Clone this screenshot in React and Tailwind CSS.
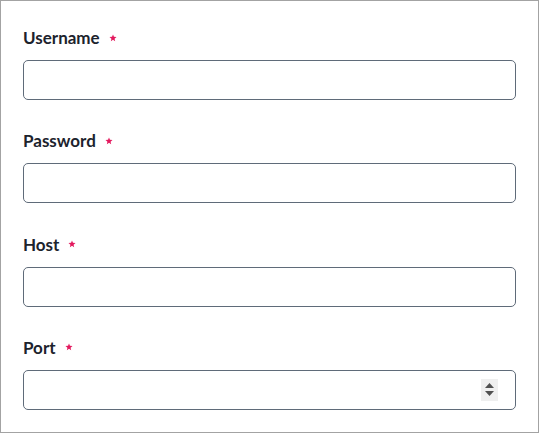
import React from "react";

function Field({ label, spinner }) {
  return (
    <div className="flex flex-col">
      <label className="flex items-center h-6 mb-[10px] text-[17px] leading-6 font-bold text-[#1c232d]">
        <span>{label}</span>
        <svg className="ml-[9px] relative top-[-0.5px]" width="8" height="8" viewBox="0 0 24 24">
          <path
            d="M12 1.5 L14.9 8.6 L22.5 9.2 L16.7 14.1 L18.5 21.6 L12 17.6 L5.5 21.6 L7.3 14.1 L1.5 9.2 L9.1 8.6 Z"
            fill="#e3195e"
          />
        </svg>
      </label>
      <div className="relative">
        <input
          type="text"
          className="block w-full h-10 rounded-[5px] border border-[#5f6b79] bg-white px-3 outline-none"
        />
        {spinner && (
          <div className="absolute right-[18px] top-[9px] w-[17px] h-[22px] bg-[#efefef] flex flex-col items-center justify-center gap-[3px]">
            <svg width="9" height="5" viewBox="0 0 9 5"><path d="M0 5 L4.5 0 L9 5 Z" fill="#505050" /></svg>
            <svg width="9" height="5" viewBox="0 0 9 5"><path d="M0 0 L4.5 5 L9 0 Z" fill="#505050" /></svg>
          </div>
        )}
      </div>
    </div>
  );
}

export default function App() {
  return (
    <div
      className="w-[539px] h-[433px] border border-[#a3a3a3] bg-white px-[22px] pt-[25px] overflow-hidden"
      style={{ fontFamily: '"Source Sans Pro", Lato, "Noto Sans", sans-serif' }}
    >
      <div className="flex flex-col gap-[29.33px]">
        <Field label="Username" />
        <Field label="Password" />
        <Field label="Host" />
        <Field label="Port" spinner />
      </div>
    </div>
  );
}
